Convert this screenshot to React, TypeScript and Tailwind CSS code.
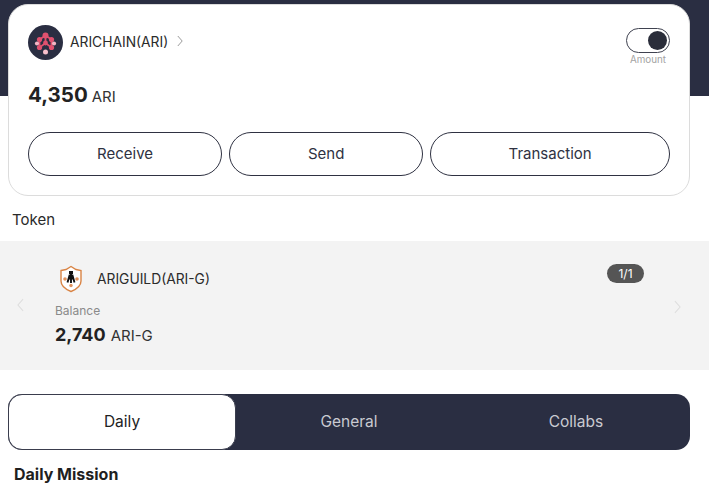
import React from "react";

function AriLogo() {
  const dots: [number, number, string, number][] = [
    [17.5, 10.5, "#e0516f", 3],
    [11.5, 14.5, "#e0516f", 2.6],
    [23.5, 14.5, "#e0516f", 2.6],
    [9, 18.5, "#f5b6c4", 2.1],
    [26, 18.5, "#f5b6c4", 2.1],
    [17.5, 18, "#e0516f", 2.4],
    [11.5, 22.5, "#e0516f", 2.6],
    [23.5, 22.5, "#e0516f", 2.6],
    [17.5, 27, "#f7c0cc", 2.5],
  ];
  return (
    <svg width="35" height="35" viewBox="0 0 35 35" className="shrink-0">
      <circle cx="17.5" cy="17.5" r="17.5" fill="#2a2e42" />
      <path d="M17.5 10.5L11.5 14.5V22.5L17.5 18L23.5 22.5V14.5L17.5 10.5V18" stroke="#e0516f" strokeWidth="1.8" fill="none" />
      {dots.map(([x, y, c, r], i) => (
        <circle key={i} cx={x} cy={y} r={r} fill={c} />
      ))}
    </svg>
  );
}

function GuildLogo() {
  return (
    <svg width="24" height="28" viewBox="0 0 24 28" className="shrink-0">
      <path d="M2 5.5L7 4.5L12 1.5L17 4.5L22 5.5V16C22 21 17 24.5 12 26.5C7 24.5 2 21 2 16Z" fill="#fff" stroke="#d98445" strokeWidth="1.4" />
      <circle cx="6" cy="14" r="1.8" fill="#e0935f" />
      <circle cx="18" cy="14" r="1.8" fill="#e0935f" />
      <circle cx="12" cy="20.5" r="1.7" fill="#e0935f" />
      <path d="M12 7V10M8.5 17.5L10.5 10.5H13.5L15.5 17.5M9 13.5H15M12 11V18" stroke="#111" strokeWidth="1.9" fill="none" />
      <rect x="10" y="6" width="4" height="3" fill="#111" />
    </svg>
  );
}

function Chevron({ dir, color, size }: { dir: "left" | "right"; color: string; size: number }) {
  return (
    <svg width={size} height={size * 2} viewBox="0 0 6 12" fill="none" className="shrink-0">
      <path d={dir === "right" ? "M0.8 1L5.2 6L0.8 11" : "M5.2 1L0.8 6L5.2 11"} stroke={color} strokeWidth="0.9" />
    </svg>
  );
}

export default function App() {
  return (
    <div className="w-[709px] h-[490px] overflow-hidden bg-white font-['Inter','Liberation_Sans',sans-serif] text-[#222]">
      <div className="h-[96px] bg-[#2a2e42]" />
      <div className="ml-2 -mt-[92px] relative w-[682px] h-[191.5px] bg-white rounded-[20px] border border-[#dcdcdc] pl-[19px] pr-[19px] pt-[20px]">
        <div className="flex justify-between h-[46px]">
          <div className="flex items-start">
            <AriLogo />
            <span className="ml-[7px] mt-[7px] text-[13.8px] leading-[20px] text-[#2b2b2b]">ARICHAIN(ARI)</span>
            <span className="ml-[9px] mt-[10px]"><Chevron dir="right" color="#8f8f8f" size={6} /></span>
          </div>
          <div className="flex flex-col items-center mt-[3px]">
            <div className="w-[44px] h-[25px] rounded-full border-[1.5px] border-[#3f4250] bg-white flex items-center justify-end pr-[2.5px]">
              <div className="w-[19px] h-[19px] rounded-full bg-[#2a2d3a]" />
            </div>
            <span className="mt-[1px] text-[9.8px] leading-[12px] text-[#a3a3a3]">Amount</span>
          </div>
        </div>
        <div className="flex items-baseline mt-[9px] h-[30px]">
          <span className="text-[20.5px] leading-[30px] font-bold text-[#222]">4,350</span>
          <span className="ml-[4px] text-[15px] text-[#333]">ARI</span>
        </div>
        <div className="flex gap-[7px] mt-[22px]">
          <button className="w-[195px] h-[44px] rounded-full border border-[#2f3242] text-[15px] text-[#2f3242]">Receive</button>
          <button className="w-[195px] h-[44px] rounded-full border border-[#2f3242] text-[15px] text-[#2f3242]">Send</button>
          <button className="w-[241px] h-[44px] rounded-full border border-[#2f3242] text-[15px] text-[#2f3242]">Transaction</button>
        </div>
      </div>
      <div className="ml-3 mt-[14px] h-[20px] text-[15px] leading-[20px] text-[#2a2a2a]">Token</div>
      <div className="mt-[11px] h-[129px] bg-[#f3f3f3] flex items-center justify-between pl-[17px] pr-[28px]">
        <Chevron dir="left" color="#dedede" size={7} />
        <div className="flex-1 h-full pl-[31px] pt-[24px]">
          <div className="flex items-center pl-[4px] h-[28px]">
            <GuildLogo />
            <span className="ml-[14px] text-[13.8px] leading-[20px] text-[#2b2b2b]">ARIGUILD(ARI-G)</span>
          </div>
          <div className="mt-[10px] text-[12px] leading-[16px] text-[#8a8a8a]">Balance</div>
          <div className="flex items-baseline mt-[3px]">
            <span className="text-[18px] leading-[26px] font-bold text-[#222]">2,740</span>
            <span className="ml-[5px] text-[15px] text-[#333]">ARI-G</span>
          </div>
        </div>
        <div className="flex flex-col items-end h-full pt-[23px]">
          <div className="mr-[37px] w-[37px] h-[19px] rounded-full bg-[#555] text-white text-[12px] leading-[19px] text-center">1/1</div>
          <div className="mt-[17px]"><Chevron dir="right" color="#dedede" size={7} /></div>
        </div>
      </div>
      <div className="ml-2 mt-[24px] w-[682px] h-[56px] rounded-[14px] bg-[#2a2e42] flex">
        <div className="w-[228px] h-full rounded-[14px] bg-white border border-[#3a3d4d] flex items-center justify-center text-[15.5px] text-[#222]">Daily</div>
        <div className="w-[226px] flex items-center justify-center text-[15.5px] text-[#c9cad1]">General</div>
        <div className="flex-1 flex items-center justify-center text-[15.5px] text-[#c9cad1]">Collabs</div>
      </div>
      <div className="ml-[14px] mt-[13px] text-[16px] leading-[22px] font-bold text-[#1f1f1f]">Daily Mission</div>
    </div>
  );
}
